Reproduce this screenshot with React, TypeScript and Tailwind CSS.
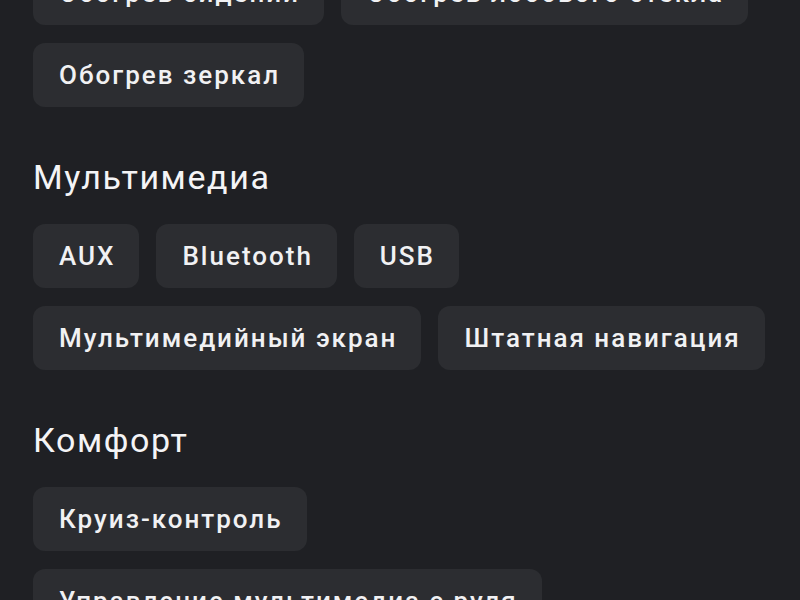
import React from "react";

const Chip = ({ label }: { label: string }) => (
  <div className="h-[64px] pl-[26px] pr-[24px] rounded-[12px] bg-[#2c2d31] flex items-center text-[26px] tracking-[2px] font-medium text-[#f1f1f3] whitespace-nowrap">
    {label}
  </div>
);

const Heading = ({ children }: { children: React.ReactNode }) => (
  <h2 className="text-[34px] leading-[40px] tracking-[1.6px] font-normal text-[#f4f4f6] mt-[50px] mb-[27px]">{children}</h2>
);

export default function App() {
  return (
    <div
      className="w-[800px] h-[600px] overflow-hidden bg-[#1f2024] px-[33px]"
      style={{ fontFamily: "Roboto, 'Noto Sans', sans-serif" }}
    >
      <div className="mt-[-39px] flex flex-wrap gap-x-[17px] gap-y-[18px]">
        <Chip label="Обогрев сидений" />
        <Chip label="Обогрев лобового стекла" />
        <Chip label="Обогрев зеркал" />
      </div>
      <Heading>Мультимедиа</Heading>
      <div className="flex flex-wrap gap-x-[17px] gap-y-[18px]">
        <Chip label="AUX" />
        <Chip label="Bluetooth" />
        <Chip label="USB" />
        <Chip label="Мультимедийный экран" />
        <Chip label="Штатная навигация" />
      </div>
      <Heading>Комфорт</Heading>
      <div className="flex flex-col items-start gap-y-[18px]">
        <Chip label="Круиз-контроль" />
        <Chip label="Управление мультимедиа с руля" />
      </div>
    </div>
  );
}
